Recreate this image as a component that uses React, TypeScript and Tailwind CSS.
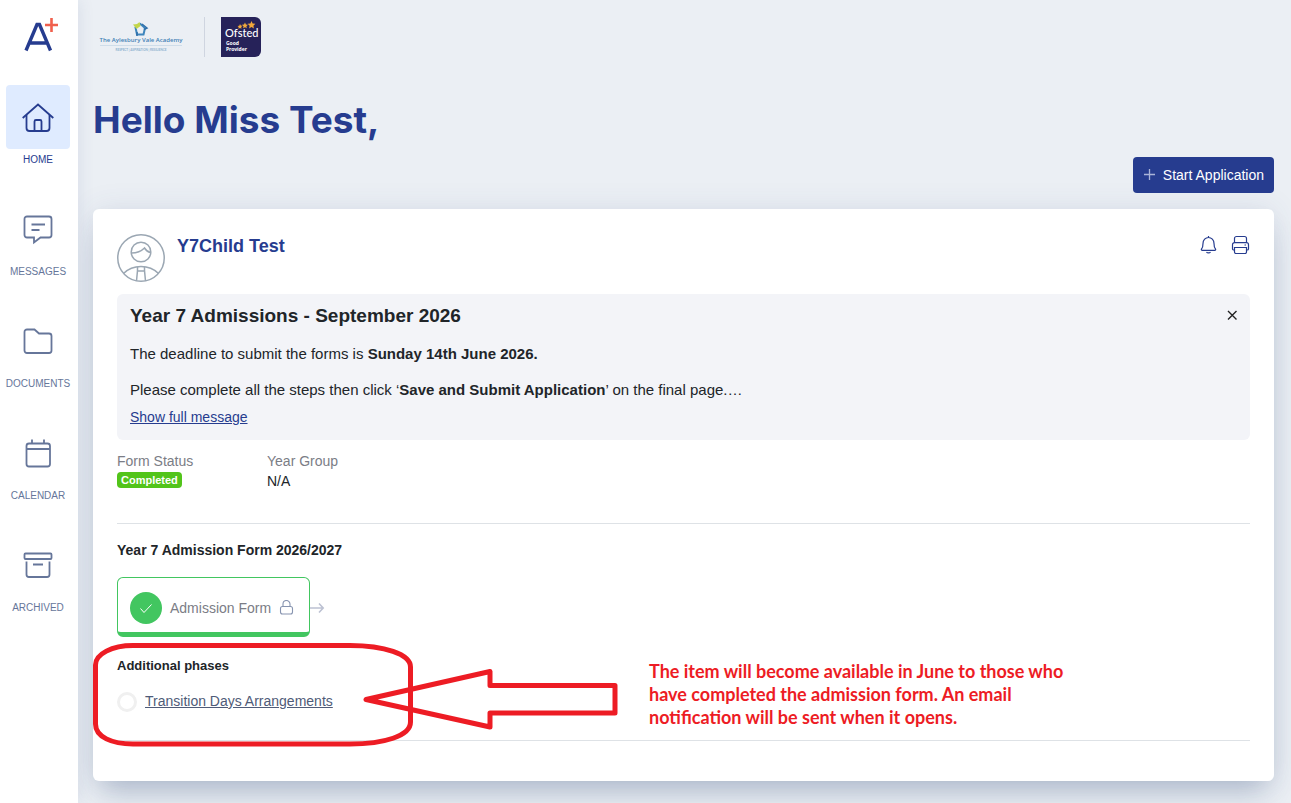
import type { ReactNode } from 'react';

interface NavItem {
  label: string;
  icon: ReactNode;
  active?: boolean;
}

const navItems: NavItem[] = [
  {
    label: 'HOME',
    active: true,
    icon: (
      <>
        <path d="M0.700 17 16 3.500 31.300 17" />
        <path d="M4.500 14v13a3 3 0 0 0 3 3h17a3 3 0 0 0 3-3V14" />
        <path d="M12.500 30V20.500a1.500 1.500 0 0 1 1.500-1.500h4a1.500 1.500 0 0 1 1.500 1.500V30" />
      </>
    ),
  },
  {
    label: 'MESSAGES',
    icon: (
      <>
        <path d="M5 3.500h22a2.500 2.500 0 0 1 2.500 2.500v16a2.500 2.500 0 0 1-2.500 2.500h-8.500L12 29.500v-5H5A2.500 2.500 0 0 1 2.500 22V6A2.500 2.500 0 0 1 5 3.500Z" />
        <path d="M9.500 11.500h13.500M9.500 17h8" />
      </>
    ),
  },
  {
    label: 'DOCUMENTS',
    icon: <path d="M5 4.500h7.500L17 8.500h10a2.500 2.500 0 0 1 2.500 2.500v14.500a2.500 2.500 0 0 1-2.500 2.500H5a2.500 2.500 0 0 1-2.500-2.500V7A2.500 2.500 0 0 1 5 4.500Z" />,
  },
  {
    label: 'CALENDAR',
    icon: (
      <>
        <rect x="4.500" y="6.500" width="23.500" height="23" rx="2.500" />
        <path d="M4.500 12H28M10 2.500v4M22 2.500v4" />
      </>
    ),
  },
  {
    label: 'ARCHIVED',
    icon: (
      <>
        <rect x="2.500" y="4.500" width="27" height="5.500" rx="1" />
        <path d="M4.500 12.500V25.500a2.500 2.500 0 0 0 2.500 2.500h18a2.500 2.500 0 0 0 2.500-2.500V12.500M11 15.500h10" />
      </>
    ),
  },
];

function Sidebar() {
  return (
    <aside className="relative z-10 w-[78px] shrink-0 bg-white pl-1.5 pr-2 shadow-[0_0_16px_rgba(60,80,140,0.12)]">
      <a href="#" aria-label="Admissions home" className="flex h-[85px] justify-center pt-4">
        <svg className="ml-1.5 h-9 w-9" viewBox="0 0 36 36" fill="none">
          <path d="M3 34.500 14 8.500h2.500L27.500 34.500M7 27h16.500" stroke="#263c8f" strokeWidth="3.400" />
          <path d="M28.500 2v14M22 9h13" stroke="#f0604d" strokeWidth="2.600" />
        </svg>
      </a>
      <nav className="flex flex-col gap-[27px]">
        {navItems.map((item) => (
          <a
            key={item.label}
            href="#"
            className={`flex flex-col items-center gap-[3px] ${item.active ? 'text-[#263c8f]' : 'text-[#66769a]'}`}
          >
            <span className={`flex h-16 w-16 items-center justify-center rounded ${item.active ? 'bg-[#dfebff]' : ''}`}>
              <svg className="h-8 w-8" viewBox="0 0 32 32" fill="none" stroke="currentColor" strokeWidth="1.800">
                {item.icon}
              </svg>
            </span>
            <span className="h-[18px] text-[10px] leading-4">{item.label}</span>
          </a>
        ))}
      </nav>
    </aside>
  );
}

function Logos() {
  return (
    <div className="flex h-10 items-center">
      <svg className="ml-1.5 h-8 w-[84px]" viewBox="0 0 84 32" role="img" aria-label="The Aylesbury Vale Academy">
        <path d="m36.500 6.500 5-3.500 4.500 4-1.500 6.500h-6.500Z" fill="none" stroke="#3f86bd" strokeWidth="2" />
        <path d="m34 3.500 4-.5 2.500-2 1 4-4 3-1.500-2Z" fill="#c3d64b" />
        <path d="m43 3 5 4-3 1.500M38 15v-4" fill="none" stroke="#2f6fa9" strokeWidth="1.500" />
        <text x="42" y="21" textAnchor="middle" className="fill-[#3f7fb5] font-['Open_Sans',sans-serif] text-[6px] font-semibold">
          The Aylesbury Vale Academy
        </text>
        <path d="M1 24.500h82" stroke="#cfdde9" strokeWidth="1" />
        <text x="42" y="30" textAnchor="middle" className="fill-[#8fb2d0] font-['Lato',sans-serif] text-[3px] font-bold">
          RESPECT | ASPIRATION | RESILIENCE
        </text>
      </svg>
      <div className="ml-[21px] h-10 w-px bg-[#cfd5e0]" />
      <svg className="ml-4 h-10 w-10" viewBox="0 0 40 40" role="img" aria-label="Ofsted Good Provider">
        <path d="M0 0h34a6 6 0 0 1 6 6v28a6 6 0 0 1-6 6H0Z" fill="#262259" />
        <path d="m19 7 .8 1.600 1.700.2-1.300 1.200.3 1.800-1.500-.8-1.700.8.4-1.800L16.500 9l1.800-.3ZM24 5.500l.9 2 2 .2-1.500 1.500.4 2.100-1.800-1-1.900 1 .4-2.100L21 7.700l2-.2ZM30.500 4l1.100 2.500 2.800.3-2 1.900.5 2.700-2.400-1.300-2.400 1.300.5-2.700-2-1.900 2.800-.3Z" fill="#f2a93b" />
        <text x="4" y="20" className="fill-white font-['Lato',sans-serif] text-[11px] font-medium">Ofsted</text>
        <text x="5" y="28" className="fill-white font-['Noto_Sans',sans-serif] text-[5px] font-bold">Good</text>
        <text x="5" y="34" className="fill-white font-['Noto_Sans',sans-serif] text-[5px] font-bold">Provider</text>
      </svg>
    </div>
  );
}

function Avatar() {
  return (
    <svg className="h-12 w-12 shrink-0" viewBox="0 0 48 48" fill="none" stroke="#9ba7b3" strokeWidth="1.500">
      <circle cx="24" cy="24" r="23.250" />
      <circle cx="24" cy="18" r="9.800" />
      <path d="M14.500 19c5 0 9.500-1.500 13-5 1.500 2.500 3.500 4 6 4.500" />
      <path d="M6.500 39.500C11 35 17 32.500 24 32.500s13 2.500 17.500 7" />
      <path d="M20.500 32.500v4l-1 10.500M27.500 32.500v4l1 10.500M20.500 37h7" />
    </svg>
  );
}

function CardHeader() {
  return (
    <div className="flex items-start">
      <Avatar />
      <h2 className="ml-3 text-[18px] font-bold leading-6 text-[#263c8f]">Y7Child Test</h2>
      <div className="ml-auto flex gap-3 text-[#263c8f]">
        <button type="button" aria-label="Notifications">
          <svg className="h-5 w-5" viewBox="0 0 20 20" fill="none" stroke="currentColor" strokeWidth="1.200">
            <path d="M10.500 2v1.500M3.500 15c1.500-1.500 1.500-3 1.500-5.500C5 6 7.500 3.500 10.500 3.500S16 6 16 9.500c0 2.500 0 4 1.500 5.500.5.800 0 1.300-.8 1.300H4.300c-.8 0-1.300-.5-.8-1.300ZM8.500 18c.8 1.200 3.200 1.200 4 0" />
          </svg>
        </button>
        <button type="button" aria-label="Print">
          <svg className="h-5 w-5" viewBox="0 0 20 20" fill="none" stroke="currentColor" strokeWidth="1.200">
            <path d="M4.500 8.500V4.500a2 2 0 0 1 2-2h8a2 2 0 0 1 2 2v4" />
            <path d="M4.500 16H3.800a1.300 1.300 0 0 1-1.300-1.300v-4a2 2 0 0 1 2-2h12a2 2 0 0 1 2 2v4a1.300 1.300 0 0 1-1.300 1.300h-.7M14.500 11h1.500" />
            <path d="M4.500 13.500h12V18a1.500 1.500 0 0 1-1.500 1.500H6A1.500 1.500 0 0 1 4.500 18Z" />
          </svg>
        </button>
      </div>
    </div>
  );
}

function Notice() {
  return (
    <section className="relative mt-3 rounded-md bg-[#f3f4f8] px-[13px] pb-[11px] pt-2.5 text-[15px] text-[#212529]">
      <h3 className="text-[19px] font-bold leading-6">Year 7 Admissions - September 2026</h3>
      <p className="mt-3.5 leading-6">
        The deadline to submit the forms is <strong>Sunday 14th June 2026.</strong>
      </p>
      <p className="mt-3 leading-6">
        Please complete all the steps then click ‘<strong>Save and Submit Application</strong>’ on the final page.…
      </p>
      <a href="#" className="mt-1 block w-fit text-[14px] leading-[23px] text-[#263c8f] underline">
        Show full message
      </a>
      <button type="button" aria-label="Dismiss message" className="absolute right-3 top-[15px]">
        <svg className="h-3 w-3" viewBox="0 0 12 12" fill="none" stroke="#222" strokeWidth="1.400">
          <path d="m2 2 8.500 8.500M10.500 2 2 10.500" />
        </svg>
      </button>
    </section>
  );
}

function AdmissionStep() {
  return (
    <div className="mt-[17px] flex items-center">
      <button
        type="button"
        className="flex h-[60px] w-[193px] items-center rounded-md border border-b-[5px] border-[#42c660] pl-3 pt-1.5 text-[14px] text-[#7b7d86]"
      >
        <span className="flex h-8 w-8 items-center justify-center rounded-full bg-[#42c660]">
          <svg className="h-4 w-4" viewBox="0 0 16 16" fill="none" stroke="white" strokeWidth="1">
            <path d="m2.500 8.500 3.500 4 7.500-8" />
          </svg>
        </span>
        <span className="ml-2">Admission Form</span>
        <svg className="ml-2 h-4 w-4" viewBox="0 0 16 16" fill="none" stroke="#8794b0" strokeWidth="1.100">
          <rect x="1.500" y="6.500" width="12" height="7.500" rx="2" />
          <path d="M4 6.500V4a3.500 3.500 0 0 1 7 0v2.500" />
        </svg>
      </button>
      <svg className="h-4 w-4" viewBox="0 0 16 16" fill="none" stroke="#bcc1d2" strokeWidth="1.600">
        <path d="M0 9h13M9 4.500 13.200 9 9 13.500" />
      </svg>
    </div>
  );
}

function AdditionalPhases() {
  return (
    <section className="relative mt-[19px] border-b border-[#dee2e6] pb-[29px]">
      <h3 className="text-[13px] font-bold leading-5 text-[#212529]">Additional phases</h3>
      <div className="mt-[15px] flex h-5 items-center">
        <span className="mt-0.5 h-5 w-5 rounded-full border-[3px] border-[#f0f0f0]" />
        <a href="#" className="ml-2 text-[14px] leading-5 text-[#4f5b78] underline">
          Transition Days Arrangements
        </a>
      </div>
      {/* hand-drawn callout laid over the section */}
      <svg
        className="pointer-events-none absolute -left-6 -top-[13px] h-[104px] w-[526px]"
        viewBox="93 643 526 104"
        fill="none"
        stroke="#ed1c24"
        strokeWidth="5"
      >
        <path d="M133 645.500H350C384 645.500 410.500 654 410.500 667V722C410.500 736 384 744 350 744H133C112 744 95.500 737 95.500 724V665C95.500 654 112 645.500 133 645.500Z" />
        <path d="M366 699.500 490 671.500V685.500H615V713H490V727Z" strokeLinejoin="round" />
      </svg>
      <p className="absolute top-1 left-[532px] w-[420px] font-['Lato',sans-serif] text-[18px] font-bold leading-[23px] text-[#ed1c24]">
        The item will become available in June to those who
        <br />
        have completed the admission form. An email
        <br />
        notification will be sent when it opens.
      </p>
    </section>
  );
}

export default function App() {
  return (
    <div className="flex min-h-screen bg-[#ebeff4] font-['Liberation_Sans',Arial,sans-serif]">
      <Sidebar />
      <main className="min-w-0 flex-1 pb-5 pl-[15px] pr-[17px] pt-[17px]">
        <Logos />
        <h1 className="mt-9 font-['Inter',sans-serif] text-[37px] font-bold leading-[54px] text-[#263c8f]">
          Hello Miss Test,
        </h1>
        <div className="mt-2.5 flex justify-end">
          <button
            type="button"
            className="flex h-9 items-center rounded bg-[#263c8f] px-2.5 text-[14px] text-white"
          >
            <svg className="mr-2 h-3 w-3" viewBox="0 0 12 12" fill="none" stroke="#aab4d8" strokeWidth="1.300">
              <path d="M6.500 0v11M1 5.500h11" />
            </svg>
            Start Application
          </button>
        </div>

        <article className="mt-4 rounded-md bg-white px-6 pb-10 pt-[25px] shadow-[0_0_30px_rgba(60,80,140,0.1),0_18px_28px_-8px_rgba(50,75,120,0.3)]">
          <CardHeader />
          <Notice />
          <dl className="mt-[11px] flex border-b border-[#dee2e6] pb-8 text-[14px] leading-5">
            <div className="w-[150px]">
              <dt className="text-[#7b7d86]">Form Status</dt>
              <dd className="mt-px w-fit rounded bg-[#52c41a] px-1 text-[11px] font-bold leading-4 text-white">Completed</dd>
            </div>
            <div>
              <dt className="text-[#7b7d86]">Year Group</dt>
              <dd className="text-[#212529]">N/A</dd>
            </div>
          </dl>
          <h3 className="mt-4 text-[14px] font-bold leading-5 text-[#212529]">Year 7 Admission Form 2026/2027</h3>
          <AdmissionStep />
          <AdditionalPhases />
        </article>
      </main>
    </div>
  );
}
